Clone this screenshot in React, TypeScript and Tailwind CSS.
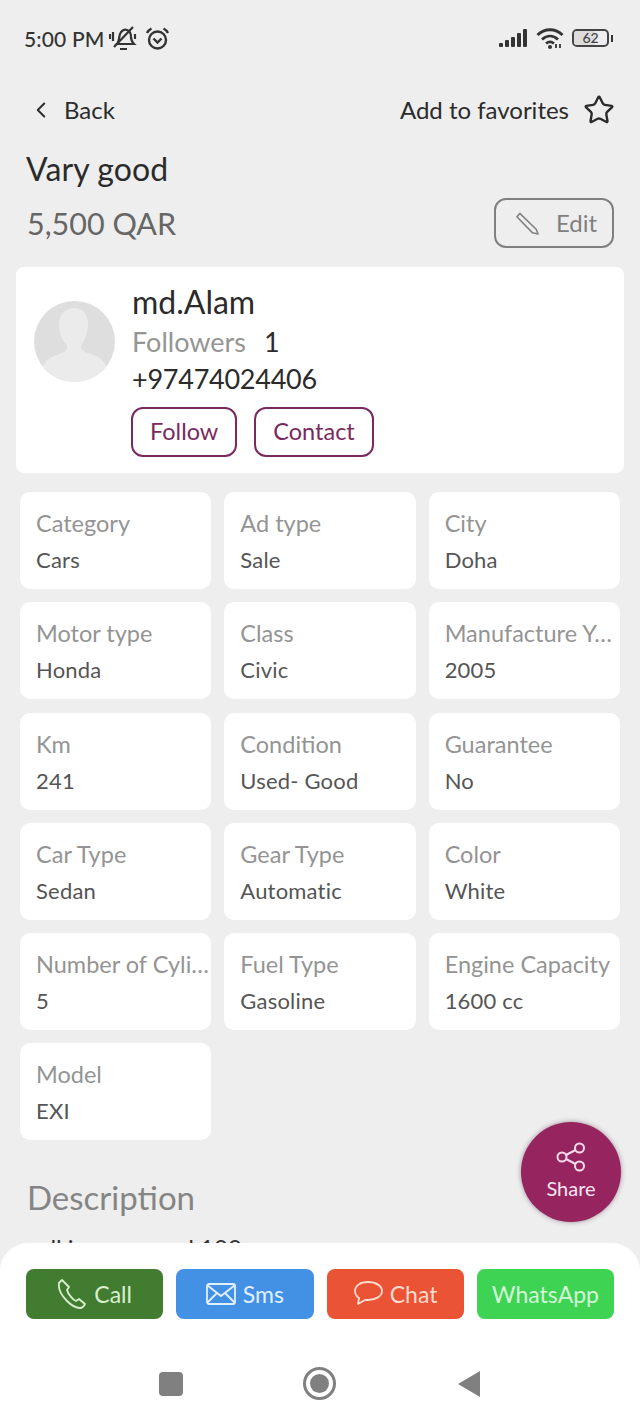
import { ChevronLeft, Star } from "lucide-react";

const FONT = "font-['Lato','Open_Sans',sans-serif]";

const SPECS = [
  ["Category", "Cars"],
  ["Ad type", "Sale"],
  ["City", "Doha"],
  ["Motor type", "Honda"],
  ["Class", "Civic"],
  ["Manufacture Year", "2005"],
  ["Km", "241"],
  ["Condition", "Used- Good"],
  ["Guarantee", "No"],
  ["Car Type", "Sedan"],
  ["Gear Type", "Automatic"],
  ["Color", "White"],
  ["Number of Cylinders", "5"],
  ["Fuel Type", "Gasoline"],
  ["Engine Capacity", "1600 cc"],
  ["Model", "EXI"],
];

function StatusBar() {
  return (
    <div className="flex h-[76px] items-center justify-between pl-6 pr-[27px] text-[#333]">
      <div className="flex items-center gap-[5px]">
        <span className="text-[21px] font-medium leading-none tracking-[0.15px]">5:00 PM</span>
        {/* muted bell */}
        <svg width="28" height="26" viewBox="0 0 28 26" fill="none" stroke="currentColor" strokeWidth="2.2">
          <path d="M8 19c2-2 2-7 3-10 1-3 4-5 7-4 3 1 4 4 4 7 0 3 1 5 3 7z" />
          <path d="M11 24h7M5 22 24 2M1 9v5M4 7v9M26 9v5" />
        </svg>
        <svg className="ml-[3px]" width="25" height="25" viewBox="0 0 25 25" fill="none" stroke="currentColor" strokeWidth="2.4">
          <circle cx="12.500" cy="14" r="8.500" />
          <path d="m8.500 12.500 4 4 4-4M2 7c1-2 2.500-3.500 4.500-4.500M23 7c-1-2-2.500-3.500-4.500-4.500" />
        </svg>
      </div>
      <div className="flex items-center gap-2">
        <svg width="29" height="18" viewBox="0 0 29 18" fill="currentColor">
          <rect x="0" y="14" width="4" height="4" rx="1" />
          <rect x="6" y="11" width="4" height="7" rx="1" />
          <rect x="12" y="8" width="4" height="10" rx="1" />
          <rect x="18" y="4" width="4" height="14" rx="1" />
          <rect x="24" y="0" width="4" height="18" rx="1" />
        </svg>
        <svg width="28" height="22" viewBox="0 0 28 22" fill="none" stroke="currentColor" strokeWidth="2.8">
          <path d="M1.500 8c7-7 18-7 25 0M6 12.500c5-4.500 11-4.500 16 0M10 16.500c2.500-2 5.500-2 8 0" />
          <circle cx="14" cy="20" r="2" fill="currentColor" stroke="none" />
          <path d="M20 17v4M24 17v4" strokeWidth="1.800" />
        </svg>
        <div className="flex items-center">
          <div className="relative flex h-[18px] w-[37px] items-center justify-center overflow-hidden rounded-[5px] border-2 border-[#444]">
            <div className="absolute inset-y-0 left-0 w-[21px] bg-[#dcdcdc]" />
            <span className="relative text-[14px] font-medium leading-none text-[#444]">62</span>
          </div>
          <div className="ml-[2px] h-[7px] w-[2px] bg-[#333]" />
        </div>
      </div>
    </div>
  );
}

function Spec({ label, value }: { label: string; value: string }) {
  return (
    <div className="flex h-[97px] min-w-0 flex-col rounded-[10px] bg-white pt-4 pl-4">
      <div className="truncate text-[23.5px] leading-[30px] text-[#949494]">{label}</div>
      <div className="mt-[9px] text-[22px] leading-[26px] tracking-[0.2px] text-[#555]">{value}</div>
    </div>
  );
}

function ActionButton({
  className,
  children,
}: {
  className: string;
  children: React.ReactNode;
}) {
  return (
    <button
      type="button"
      className={
        "flex h-[50px] flex-1 items-center justify-center gap-[7px] rounded-lg text-[23px] " + className
      }
    >
      {children}
    </button>
  );
}

export default function App() {
  return (
    <div className={"relative h-[1422px] w-[640px] overflow-hidden bg-[#eeeeee] " + FONT}>
      <StatusBar />

      <div className="mt-[12px] flex h-[44px] items-center justify-between pl-[28px] pr-[25px] text-[#2b2b2b]">
        <div className="flex items-center gap-[10px]">
          <ChevronLeft size={26} strokeWidth={1.8} />
          <span className="text-[24px]">Back</span>
        </div>
        <div className="flex items-center gap-[14px]">
          <span className="text-[24px]">Add to favorites</span>
          <Star size={32} strokeWidth={1.8} />
        </div>
      </div>

      <h1 className="mt-[19px] pl-[26px] text-[32px] font-normal leading-[36px] tracking-[0.1px] text-[#2b2b2b]">Vary good</h1>
      <div className="mt-[11px] flex items-start justify-between pl-[27px] pr-[26px]">
        <span className="mt-[5px] text-[30.5px] leading-[40px] text-[#666]">5,500 QAR</span>
        <button
          type="button"
          className="flex h-[50px] w-[120px] items-center justify-center gap-[16px] rounded-xl border-2 border-[#808080] pl-1 text-[24px] text-[#808080]"
        >
          <svg width="25" height="25" viewBox="0 0 26 26" fill="none" stroke="currentColor" strokeWidth="1.6" strokeLinejoin="round">
            <path d="M2 6 5 2.500 22 19l2 5-6-1.500z" />
          </svg>
          Edit
        </button>
      </div>

      <div className="mx-4 mt-[19px] flex h-[206px] rounded-lg bg-white pl-[18px]">
        <div className="relative mt-[34px] h-[81px] w-[81px] shrink-0 overflow-hidden rounded-full bg-[#dedede]">
          <svg width="81" height="81" viewBox="0 0 81 81" fill="#ebebeb">
            <path d="M40 7c10 0 15 8 14 19-1 7-3 13-6 17-2 3-1 6 3 8 8 3 18 5 21 14l1 16H8l1-16c3-9 14-11 21-14 3-2 4-5 2-8-4-4-6-10-7-17C24 15 30 7 40 7z" />
          </svg>
        </div>
        <div className="ml-[17px] flex flex-col">
          <div className="mt-[17px] text-[32px] leading-[36px] text-[#2b2b2b]">md.Alam</div>
          <div className="mt-[3px] flex gap-[18px] text-[27px] leading-[38px]">
            <span className="text-[#959595]">Followers</span>
            <span className="text-[#2b2b2b]">1</span>
          </div>
          <div className="text-[27px] leading-[36px] tracking-[-0.25px] text-[#2b2b2b]">+97474024406</div>
          <div className="mt-[10px] -ml-px flex gap-[17px]">
            {["Follow", "Contact"].map((t) => (
              <button
                key={t}
                type="button"
                className="flex h-[50px] items-center rounded-xl border-2 border-[#7b2a5e] px-[17px] text-[23.5px] text-[#7b2a5e]"
              >
                {t}
              </button>
            ))}
          </div>
        </div>
      </div>

      <div className="mt-[19px] grid grid-cols-3 gap-x-[13px] gap-y-[13.3px] pl-5 pr-5">
        {SPECS.map(([label, value]) => (
          <Spec key={label} label={label} value={value} />
        ))}
      </div>

      <h2 className="mt-[37px] pl-[27px] text-[33px] font-normal leading-[40px] text-[#858585]">Description</h2>
      {/* only the tops of this line show above the bottom bar */}
      <p className="mt-4 pl-[27px] text-[24px] leading-[30px] text-[#333]">call is very good 100</p>

      <div className="absolute left-[521px] top-[1122px] flex h-[100px] w-[100px] flex-col items-center justify-center rounded-full bg-[#95245f] pb-1 text-white shadow-[0_0_5px_rgba(80,40,70,0.5)]">
        <svg width="32" height="32" viewBox="0 0 32 32" fill="none" stroke="#fbdcef" strokeWidth="2">
          <circle cx="24.500" cy="7" r="4.500" />
          <circle cx="7" cy="16" r="4.500" />
          <circle cx="24.500" cy="25" r="4.500" />
          <path d="m11 14 9.500-5M11 18l9.500 5" />
        </svg>
        <span className="mt-[3px] text-[20px] leading-[24px] text-[#fbe4f2]">Share</span>
      </div>

      <div className="absolute inset-x-0 bottom-0 h-[179px] rounded-t-[28px] bg-white">
        <div className="mt-[26px] flex gap-[13px] pl-[26px] pr-[26px]">
          <ActionButton className="bg-[#427c30] text-[#d9f0cf]">
            <svg width="30" height="32" viewBox="0 0 30 32" fill="none" stroke="currentColor" strokeWidth="1.8" strokeLinejoin="round">
              <path d="M5 2 2 5c-1 6 3 13 8 18 4 4 9 7 13 7 2 0 4-2 5-4l-6-5-3 2c-3-1-8-7-9-11l2-3z" />
            </svg>
            Call
          </ActionButton>
          <ActionButton className="bg-[#4291e4] text-[#e1f0ff]">
            <svg width="30" height="22" viewBox="0 0 30 22" fill="none" stroke="currentColor" strokeWidth="1.8">
              <rect x="1" y="1" width="28" height="20" rx="2" />
              <path d="m1 2 14 11L29 2M1 20l10-10M29 20 19 10" />
            </svg>
            Sms
          </ActionButton>
          <ActionButton className="bg-[#ea5334] text-[#ffdccf]">
            <svg width="30" height="26" viewBox="0 0 30 26" fill="none" stroke="currentColor" strokeWidth="1.8" strokeLinejoin="round">
              <path d="M15 1C7 1 2 5 2 10c0 3 1 5 4 7l-1 6 7-4h3c8 0 14-4 14-9S23 1 15 1z" />
            </svg>
            Chat
          </ActionButton>
          <ActionButton className="bg-[#3ed353] text-[#d2f7d7]">WhatsApp</ActionButton>
        </div>

        <div className="mt-[48px] flex items-center pl-[159px]">
          <div className="h-[24px] w-[24px] rounded-[4px] bg-[#808080]" />
          <div className="ml-[120px] flex h-[33px] w-[33px] items-center justify-center rounded-full border-[3px] border-[#808080]">
            <div className="h-[19px] w-[19px] rounded-full bg-[#808080]" />
          </div>
          <svg className="ml-[121px]" width="24" height="28" viewBox="0 0 24 28" fill="#808080">
            <path d="M23 1v26L1 14z" />
          </svg>
        </div>
      </div>
    </div>
  );
}
